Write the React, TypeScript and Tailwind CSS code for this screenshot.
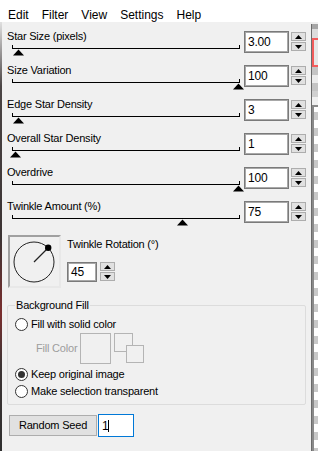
import React from "react";

const rows = [
  { label: "Star Size (pixels)", value: "3.00", thumb: 6 },
  { label: "Size Variation", value: "100", thumb: 226 },
  { label: "Edge Star Density", value: "3", thumb: 6 },
  { label: "Overall Star Density", value: "1", thumb: 3 },
  { label: "Overdrive", value: "100", thumb: 226 },
  { label: "Twinkle Amount (%)", value: "75", thumb: 170 },
];

function Arrow({ up }: { up?: boolean }) {
  return (
    <svg width="7" height="4" viewBox="0 0 7 4">
      <polygon points={up ? "3.5,0 7,4 0,4" : "0,0 7,0 3.5,4"} fill="#000" />
    </svg>
  );
}

function Spinner() {
  return (
    <div className="ml-[2px] flex flex-col gap-[1px] pt-[1px]">
      <div className="w-[15px] h-[9px] bg-[#e1e1e1] border border-[#adadad] flex items-center justify-center">
        <Arrow up />
      </div>
      <div className="w-[15px] h-[9px] bg-[#e1e1e1] border border-[#adadad] flex items-center justify-center">
        <Arrow />
      </div>
    </div>
  );
}

function NumberBox({ value, w = "w-[45px]", h = "h-[22px]" }: { value: string; w?: string; h?: string }) {
  return (
    <div className={`${w} ${h} bg-white border border-[#7a7a7a] shadow-[inset_0_0_0_1px_#a8a8a8] flex items-center pl-[3px] text-[12px] text-black`}>
      {value}
    </div>
  );
}

function Slider({ thumb }: { thumb: number }) {
  return (
    <div className="relative ml-[5px] mt-[2px] w-[228px] h-[4px] border-x border-b border-black">
      <svg
        className="absolute top-[4px]"
        style={{ left: thumb - 6.5 }}
        width="11"
        height="7"
        viewBox="0 0 11 7"
      >
        <polygon points="5.5,0.5 11,6.5 0,6.5" fill="#000" />
      </svg>
    </div>
  );
}

function Radio({ label, checked }: { label: string; checked?: boolean }) {
  return (
    <div className="flex items-center h-[13px] gap-[3px]">
      <div className="w-[13px] h-[13px] rounded-full border border-[#333] bg-white flex items-center justify-center">
        {checked && <div className="w-[7px] h-[7px] rounded-full bg-[#333]" />}
      </div>
      <span className="leading-[13px]">{label}</span>
    </div>
  );
}

export default function App() {
  return (
    <div className="w-[318px] h-[451px] overflow-hidden bg-[#f0f0f0] flex flex-col font-['Liberation_Sans',Arial,sans-serif] text-black">
      {/* Menu */}
      <div className="h-[22px] bg-white flex gap-[13px] pl-[8px] pt-[8px] text-[12px] leading-[14px]">
        <span>Edit</span>
        <span>Filter</span>
        <span>View</span>
        <span>Settings</span>
        <span>Help</span>
      </div>

      <div className="flex flex-1">
        <div className="w-[2px] bg-[linear-gradient(to_bottom,#e0e0e0,#4a4444_15%,#3b3333_50%,#7a2e2e_68%,#3d3434_80%,#2f2f2f)]" />

        {/* Main */}
        <div className="w-[309px] pl-[5px] pt-[9px] flex flex-col text-[11px] tracking-[-0.2px]">
          {rows.map((r) => (
            <div key={r.label} className="flex h-[34px]">
              <div className="w-[237px] flex flex-col">
                <div className="h-[13px] -mt-[1px] leading-[13px]">{r.label}</div>
                <Slider thumb={r.thumb} />
              </div>
              <NumberBox value={r.value} />
              <Spinner />
            </div>
          ))}

          {/* Twinkle Rotation */}
          <div className="flex">
            <div className="ml-[1px] w-[53px] h-[53px] border-2 border-t-[#a0a0a0] border-l-[#a0a0a0] border-b-[#e8e8e8] border-r-[#e8e8e8]">
              <svg width="49" height="49" viewBox="0 0 49 49">
                <circle cx="24" cy="25" r="20" fill="none" stroke="#222" strokeWidth="1" />
                <line x1="24" y1="25" x2="38" y2="11" stroke="#222" strokeWidth="1.3" />
                <circle cx="38.2" cy="10.8" r="3.2" fill="#000" />
              </svg>
            </div>
            <div className="ml-[6px] flex flex-col">
              <div className="mt-[3px] leading-[13px]">Twinkle Rotation (°)</div>
              <div className="flex mt-[11px]">
                <NumberBox value="45" w="w-[30px]" h="h-[20px]" />
                <div className="ml-[1px] -mt-[1px]">
                  <Spinner />
                </div>
              </div>
            </div>
          </div>

          {/* Background Fill */}
          <fieldset className="mt-[11px] w-[299px] border border-[#dcdcdc] rounded-[2px] pl-[7px] pb-[6px]">
            <legend className="px-[1px] leading-[12px]">Background Fill</legend>
            <div className="mt-[7px]">
              <Radio label="Fill with solid color" />
            </div>
            <div className="flex items-center mt-[2px] h-[31px]">
              <span className="ml-[21px] w-[44px] text-[#9d9d9d]">Fill Color</span>
              <div className="w-[31px] h-[31px] border border-[#b4b4b4]" />
              <div className="relative ml-[3px] w-[30px] h-[31px]">
                <div className="absolute left-0 top-0 w-[19px] h-[19px] border border-[#b4b4b4]" />
                <div className="absolute left-[12px] top-[12px] w-[18px] h-[18px] border border-[#b4b4b4] bg-[#f0f0f0]" />
              </div>
            </div>
            <div className="mt-[4px]">
              <Radio label="Keep original image" checked />
            </div>
            <div className="mt-[4px]">
              <Radio label="Make selection transparent" />
            </div>
          </fieldset>

          {/* Random Seed */}
          <div className="flex items-center mt-[9px]">
            <div className="ml-[2px] w-[88px] h-[21px] bg-[#e1e1e1] border border-[#adadad] flex items-center justify-center">
              Random Seed
            </div>
            <div className="ml-[1px] w-[36px] h-[23px] bg-white border border-[#0078d7] flex items-center pl-[3px] text-[12px]">
              <span>1</span>
              <span className="w-[1px] h-[12px] bg-black" />
            </div>
          </div>
        </div>

        {/* Right edge */}
        <div className="w-[1px] mt-[2px] bg-[#6b6b6b]" />
        <div className="w-[6px] flex flex-col">
          <div className="mt-[2px] h-[73px] bg-[#d0d0d0] flex flex-col">
            <div className="h-[5px] bg-[#a6a6a6]" />
            <div className="h-[9px] bg-[#dcdcdc]" />
            <div className="h-[29px] border-y-2 border-l-2 border-[#f25c5c] bg-[#e6e6e6]" />
            <div className="h-[8px] bg-[#c4c4c4]" />
            <div className="h-[8px] bg-[#ececec]" />
            <div className="h-[8px] bg-[#c4c4c4]" />
          </div>
          <div className="h-[8px]" />
          <div className="flex-1 border-t-2 border-l-2 border-[#8a8a8a] bg-[repeating-linear-gradient(to_bottom,#fff_0_5px,#c8c8c8_5px_13px,#fff_13px_16px)]" />
        </div>
      </div>
    </div>
  );
}
